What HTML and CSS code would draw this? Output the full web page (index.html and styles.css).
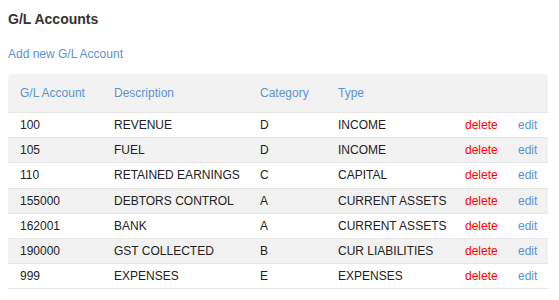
FILE: index.html
```html
<!DOCTYPE html>
<html>
<head>
<meta charset="utf-8">
<link rel="stylesheet" href="styles.css">
</head>
<body>
<h3 class="title">G/L Accounts</h3>
<a class="add-link" href="#">Add new G/L Account</a>
<table class="gl-table">
  <colgroup>
    <col class="c-acc"><col class="c-desc"><col class="c-cat"><col class="c-type"><col class="c-del"><col class="c-edit">
  </colgroup>
  <thead>
    <tr><th>G/L Account</th><th>Description</th><th>Category</th><th>Type</th><th></th><th></th></tr>
  </thead>
  <tbody>
    <tr><td>100</td><td>REVENUE</td><td>D</td><td>INCOME</td><td><a class="del" href="#">delete</a></td><td><a class="edit" href="#">edit</a></td></tr>
    <tr><td>105</td><td>FUEL</td><td>D</td><td>INCOME</td><td><a class="del" href="#">delete</a></td><td><a class="edit" href="#">edit</a></td></tr>
    <tr><td>110</td><td>RETAINED EARNINGS</td><td>C</td><td>CAPITAL</td><td><a class="del" href="#">delete</a></td><td><a class="edit" href="#">edit</a></td></tr>
    <tr><td>155000</td><td>DEBTORS CONTROL</td><td>A</td><td>CURRENT ASSETS</td><td><a class="del" href="#">delete</a></td><td><a class="edit" href="#">edit</a></td></tr>
    <tr><td>162001</td><td>BANK</td><td>A</td><td>CURRENT ASSETS</td><td><a class="del" href="#">delete</a></td><td><a class="edit" href="#">edit</a></td></tr>
    <tr><td>190000</td><td>GST COLLECTED</td><td>B</td><td>CUR LIABILITIES</td><td><a class="del" href="#">delete</a></td><td><a class="edit" href="#">edit</a></td></tr>
    <tr><td>999</td><td>EXPENSES</td><td>E</td><td>EXPENSES</td><td><a class="del" href="#">delete</a></td><td><a class="edit" href="#">edit</a></td></tr>
  </tbody>
</table>
</body>
</html>
```
FILE: styles.css
```css
body {
  margin: 8px;
  font-family: "Liberation Sans", Arial, sans-serif;
  font-size: 12px;
  color: #222;
  background: #fff;
}
.title {
  margin: 3px 0 0 0;
  font-size: 14px;
  line-height: 16px;
  font-weight: bold;
  color: #333;
}
.add-link {
  display: block;
  margin-top: 20px;
  line-height: 14px;
  color: #5b93d2;
  text-decoration: none;
}
.gl-table {
  margin-top: 13px;
  width: 540px;
  border-collapse: separate;
  border-spacing: 0;
  table-layout: fixed;
}
.c-acc { width: 94px; }
.c-desc { width: 146px; }
.c-cat { width: 78px; }
.c-type { width: 127px; }
.c-del { width: 53px; }
.c-edit { width: 42px; }
.gl-table th {
  background: #f2f2f2;
  height: 39px;
  padding: 0 0 0 12px;
  text-align: left;
  font-weight: normal;
  color: #5b93d2;
  border-bottom: 1px solid #e6e6e6;
  box-sizing: border-box;
}
.gl-table th:first-child { border-top-left-radius: 4px; }
.gl-table th:last-child { border-top-right-radius: 4px; }
.gl-table td {
  height: 25.2px;
  padding: 0 0 0 12px;
  border-bottom: 1px solid #e6e6e6;
  box-sizing: border-box;
  white-space: nowrap;
}
.gl-table tbody tr:nth-child(even) td { background: #f2f2f2; }
.del { color: #ff0000; text-decoration: none; }
.edit { color: #5b93d2; text-decoration: none; }
```
